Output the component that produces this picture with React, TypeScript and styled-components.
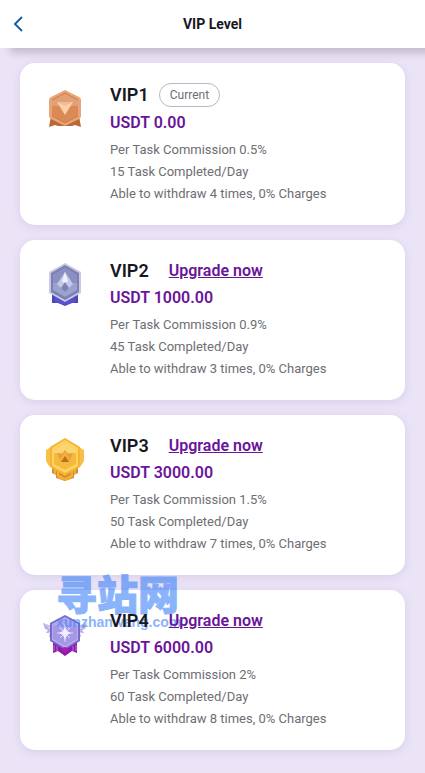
import React from "react";
import styled, { createGlobalStyle } from "styled-components";

const GlobalStyle = createGlobalStyle`
  *, *::before, *::after { box-sizing: border-box; }
  body {
    margin: 0;
    background: #ebe4f7;
    font-family: Roboto, sans-serif;
    color: #17171f;
  }
  h1, h2, p, ul { margin: 0; padding: 0; }
`;

const Page = styled.div`
  position: relative;
  min-height: 100vh;
  overflow: hidden;
`;

const Header = styled.header`
  display: grid;
  grid-template-columns: 48px 1fr 48px;
  align-items: center;
  height: 48px;
  background: #fff;
  box-shadow: 10px 5px 8px rgba(0, 0, 0, 0.18);
`;

const BackButton = styled.button`
  display: flex;
  align-items: center;
  height: 48px;
  padding: 0 0 0 13px;
  border: 0;
  background: none;
  color: #1d5fa8;
  cursor: pointer;
`;

const Title = styled.h1`
  font-size: 14px;
  line-height: 20px;
  font-weight: 700;
  text-align: center;
`;

const Levels = styled.ul`
  display: flex;
  flex-direction: column;
  gap: 15px;
  padding: 15px 20px 23px;
  list-style: none;
`;

const Card = styled.li`
  display: grid;
  grid-template-columns: 50px 1fr;
  column-gap: 20px;
  align-items: start;
  padding: 20px;
  border-radius: 15px;
  background: #fff;
  box-shadow: 0 2px 10px rgba(90, 60, 140, 0.12);
`;

const Medal = styled.svg`
  display: block;
  width: 50px;
  height: 50px;
`;

const Content = styled.div`
  z-index: 1;
`;

const Heading = styled.div`
  display: flex;
  align-items: center;
  min-height: 22px;
`;

const Name = styled.h2`
  font-size: 18px;
  line-height: 22px;
  font-weight: 600;
`;

const Current = styled.span`
  height: 24px;
  margin-left: 10px;
  padding: 0 10px;
  border: 1px solid #b7b8c4;
  border-radius: 12px;
  font-size: 12px;
  line-height: 22px;
  color: #6e6e73;
`;

const Upgrade = styled.a`
  margin-left: 20px;
  font-size: 16px;
  line-height: 22px;
  font-weight: 600;
  color: #6a1599;
`;

const Amount = styled.p`
  margin: 5px 0;
  font-size: 16px;
  line-height: 22px;
  font-weight: 600;
  color: #6a1599;
`;

const Detail = styled.p`
  font-size: 13px;
  line-height: 22px;
  color: #6e6e73;
`;

const Watermark = styled.div`
  position: absolute;
  top: 570px;
  left: 56px;
  color: #3c82f8;
  opacity: 0.6;
  pointer-events: none;
  white-space: nowrap;
`;

const WatermarkName = styled.div`
  font: 900 41px/44px "Noto Sans CJK SC", sans-serif;
  -webkit-text-stroke: 1px #3c82f8;
`;

const WatermarkSite = styled.div`
  font: 700 14px/16px "Liberation Sans", sans-serif;
`;

type Tier = "bronze" | "silver" | "gold" | "violet";

const BronzeArt = () => (
  <>
    <path d="M11 33 9 44 15 42 18 43H32L35 42 41 44 39 33Z" fill="#b86a35" />
    <path d="M25 7 39 14Q41 15 41 17V33Q41 35 39 36L25 43 11 36Q9 35 9 33V17Q9 15 11 14Z" fill="#e9a477" />
    <path d="M25 10 38 17V33L25 40 12 33V17Z" fill="#db8a56" />
    <path d="M25 10 38 17V23H12V17Z" fill="#e2a077" />
    <path d="M12 17 25 10 38 17M12 33 25 40 38 33" fill="none" stroke="#d07c48" />
    <path d="M17 19H33L25 32Z" fill="#fbd0ab" />
    <path d="M17 19H33L25 23Z" fill="#f3bd94" />
  </>
);

const SilverArt = () => (
  <>
    <path d="M12 30H38V43L32 43 25 46 18 43 12 43Z" fill="#4b48ba" />
    <path d="M15 37 25 42 35 37V42L25 45 15 42Z" fill="#5a50cc" />
    <path d="M25 3 41 12V33L25 42 9 33V12Z" fill="#c9c8e5" />
    <path d="M25 5 39 13V32L25 40 11 32V13Z" fill="#7c80b2" />
    <path d="M25 8 37 15V30L25 37 13 30V15Z" fill="#9ba2cd" />
    <path d="M13 15 25 8 37 15V23H13Z" fill="#8b8fc2" />
    <path d="m25 12 8 12-5 5-3-6-3 6-5-5Z" fill="#c3c9e8" />
    <path d="m25 12 3 9-3 3-3-3Z" fill="#eff0fa" />
    <path d="m25 22 4 6-4 4-4-4Z" fill="#7d83b2" />
  </>
);

const GoldArt = () => (
  <>
    <path d="M11 12 6 15V26L9 31 15 34H35L41 31 44 26V15L39 12Z" fill="#f8c04a" />
    <path d="M12 29V38L16 40V43L25 46 34 43V40L38 38V29Z" fill="#d98b2c" />
    <path d="M15 34V39M18 35V42M32 35V42M35 34V39" stroke="#ffd166" />
    <path d="M25 3 40 12V32L25 41 10 32V12Z" fill="#f7b42e" />
    <path d="M25 5 38 13V31L25 38 12 31V13Z" fill="#ffd363" />
    <path d="M25 8 36 15V29L25 35 14 29V15Z" fill="#f5b93e" />
    <path d="M14 15 25 8 36 15V18H14Z" fill="#fbd574" />
    <path d="m17 18 5 1 3-4 3 4 5-1-4 9H21Z" fill="#e8a035" />
    <path d="m25 16 6 11H19Z" fill="#f2b039" />
    <path d="m25 21 4 6h-8Z" fill="#b8701f" />
    <path d="m18 39 7 4 7-4v4l-7 3-7-3Z" fill="#efb133" />
  </>
);

const VioletArt = () => (
  <>
    <path d="M13 31V43L18 41 25 46 32 41 37 43V31Z" fill="#8d1aaa" />
    <path d="M14 35V41M17 36V41M33 36V41M36 35V41" stroke="#c36de0" />
    <path d="M12 16 3 13 5 19 8 20 6 23 10 23 9 27 14 26ZM38 16 47 13 45 19 42 20 44 23 40 23 41 27 36 26Z" fill="#b5b0ea" />
    <path d="m5 14 8 5-5-1m5 4-5 1m37-9-8 5 5-1m-5 4 5 1" fill="none" stroke="#ddd9fa" />
    <path d="M25 5 40 13V31L25 40 10 31V13Z" fill="#7669c8" />
    <path d="M25 7 38 14V30L25 38 12 30V14Z" fill="#b9adf0" />
    <path d="M25 9 37 15V29L25 36 13 29V15Z" fill="#a597e6" />
    <path d="M13 15 25 9 37 15 25 21Z" fill="#b1a4ed" />
    <path d="M25 14V32M17 23H33M20 18 30 28M30 18 20 28" stroke="#e5dbff" />
    <path d="m25 17 2 4 4 2-4 2-2 5-2-5-4-2 4-2Z" fill="#f2edff" />
    <path d="m21 39 4 4 4-4-4-2Z" fill="#b01ab4" />
  </>
);

const art: Record<Tier, () => React.ReactElement> = {
  bronze: BronzeArt,
  silver: SilverArt,
  gold: GoldArt,
  violet: VioletArt,
};

interface Level {
  name: string;
  tier: Tier;
  price: string;
  commission: string;
  tasks: number;
  withdrawals: number;
  current?: boolean;
}

const levels: Level[] = [
  { name: "VIP1", tier: "bronze", price: "0.00", commission: "0.5%", tasks: 15, withdrawals: 4, current: true },
  { name: "VIP2", tier: "silver", price: "1000.00", commission: "0.9%", tasks: 45, withdrawals: 3 },
  { name: "VIP3", tier: "gold", price: "3000.00", commission: "1.5%", tasks: 50, withdrawals: 7 },
  { name: "VIP4", tier: "violet", price: "6000.00", commission: "2%", tasks: 60, withdrawals: 8 },
];

function LevelCard({ level }: { level: Level }) {
  const Art = art[level.tier];
  return (
    <Card>
      <Medal viewBox="0 0 50 50" aria-hidden="true">
        <Art />
      </Medal>
      <Content>
        <Heading>
          <Name>{level.name}</Name>
          {level.current ? <Current>Current</Current> : <Upgrade href={`#${level.name}`}>Upgrade now</Upgrade>}
        </Heading>
        <Amount>USDT {level.price}</Amount>
        <Detail>Per Task Commission {level.commission}</Detail>
        <Detail>{level.tasks} Task Completed/Day</Detail>
        <Detail>Able to withdraw {level.withdrawals} times, 0% Charges</Detail>
      </Content>
    </Card>
  );
}

export default function App() {
  return (
    <Page>
      <GlobalStyle />
      <Header>
        <BackButton type="button" aria-label="Back">
          <svg width="12" height="18" viewBox="0 0 12 18" fill="none" stroke="currentColor" strokeWidth="2">
            <path d="M9 2 2 9l7 7" />
          </svg>
        </BackButton>
        <Title>VIP Level</Title>
      </Header>
      <main>
        <Levels>
          {levels.map((level) => (
            <LevelCard key={level.name} level={level} />
          ))}
        </Levels>
      </main>
      <Watermark>
        <WatermarkName lang="zh">寻站网</WatermarkName>
        <WatermarkSite>xunzhanwang.com</WatermarkSite>
      </Watermark>
    </Page>
  );
}
